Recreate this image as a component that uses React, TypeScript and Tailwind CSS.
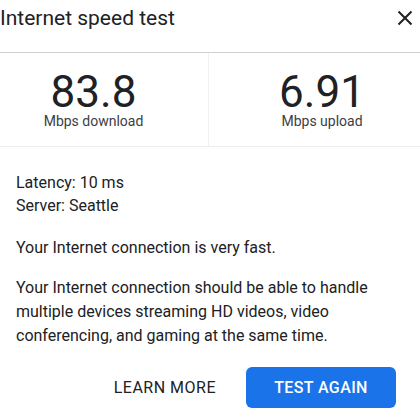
import React from "react";

export default function App() {
  return (
    <div className="w-[420px] h-[420px] bg-white overflow-hidden text-[#202124]" style={{ fontFamily: "Roboto, 'Noto Sans', sans-serif" }}>
      <div className="h-[53px] border-b border-[#cfcfcf] flex items-start justify-between pt-[4px]">
        <div className="text-[21px] leading-[28px]">Internet speed test</div>
        <div className="mt-[6px] mr-[7px]">
          <svg width="16" height="16" viewBox="0 0 16 16">
            <path d="M1.5 1.5 L14.5 14.5 M14.5 1.5 L1.5 14.5" stroke="#202124" strokeWidth="2" fill="none" />
          </svg>
        </div>
      </div>
      <div className="h-[94px] border-b border-[#ececec] flex">
        <div className="w-[209px] border-r border-[#f1f1f1] flex flex-col items-center pt-[22px] pr-[21px]">
          <div className="text-[44px] leading-[34px] text-[#202124]">83.8</div>
          <div className="text-[14px] leading-[14px] mt-[5px] text-[#3c4043]">Mbps download</div>
        </div>
        <div className="flex-1 flex flex-col items-center pt-[22px] pl-[15px]">
          <div className="text-[44px] leading-[34px] text-[#202124]">6.91</div>
          <div className="text-[14px] leading-[14px] mt-[5px] text-[#3c4043]">Mbps upload</div>
        </div>
      </div>
      <div className="pl-[16px] pr-[24px] pt-[24px] text-[16px]">
        <div className="leading-[23px]">Latency: 10 ms</div>
        <div className="leading-[23px]">Server: Seattle</div>
        <div className="leading-[24px] mt-[19px]">Your Internet connection is very fast.</div>
        <div className="leading-[24px] mt-[16px]">
          Your Internet connection should be able to handle multiple devices streaming HD videos, video conferencing, and gaming at the same time.
        </div>
        <div className="flex justify-end items-center mt-[19px]">
          <div className="text-[16px] tracking-[0.5px] mr-[30px]">LEARN MORE</div>
          <div className="w-[150px] h-[41px] rounded-[6px] bg-[#1a73e8] text-white text-[16px] tracking-[0.4px] font-medium flex items-center justify-center">TEST AGAIN</div>
        </div>
      </div>
    </div>
  );
}
